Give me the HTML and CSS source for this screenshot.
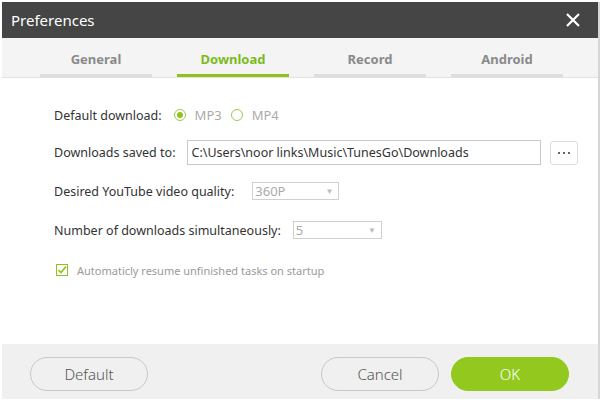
FILE: index.html
```html
<!DOCTYPE html>
<html lang="en">

<head>
    <meta charset="UTF-8">
    <meta name="viewport" content="width=device-width, initial-scale=1.0">
    <title>Preferences</title>
    <link rel="stylesheet" href="styles.css">
</head>

<body>
    <div class="dialog">
        <div class="title-bar">
            <span class="title">Preferences</span>
            <span class="close">
                <svg width="14" height="14" viewBox="0 0 14 14">
                    <path d="M1 1 L13 13 M13 1 L1 13" stroke="#fff" stroke-width="2.2" fill="none" />
                </svg>
            </span>
        </div>
        <div class="tab-header">
            <span class="tab-item">General</span>
            <span class="tab-item active">Download</span>
            <span class="tab-item">Record</span>
            <span class="tab-item">Android</span>
        </div>
        <div class="content">
            <div class="row row-format">
                <span class="label">Default download:</span>
                <span class="radio checked"></span>
                <span class="radio-text">MP3</span>
                <span class="radio"></span>
                <span class="radio-text">MP4</span>
            </div>
            <div class="row row-path">
                <span class="label">Downloads saved to:</span>
                <div class="path-input">C:\Users\noor links\Music\TunesGo\Downloads</div>
                <div class="browse">
                    <svg width="14" height="4" viewBox="0 0 14 4">
                        <rect x="1" y="1" width="2" height="2" fill="#666" />
                        <rect x="6" y="1" width="2" height="2" fill="#666" />
                        <rect x="11" y="1" width="2" height="2" fill="#666" />
                    </svg>
                </div>
            </div>
            <div class="row row-quality">
                <span class="label">Desired YouTube video quality:</span>
                <div class="select select-quality">360P<span class="arrow">▼</span></div>
            </div>
            <div class="row row-count">
                <span class="label">Number of downloads simultaneously:</span>
                <div class="select select-count">5<span class="arrow">▼</span></div>
            </div>
            <div class="row row-check">
                <span class="checkbox">
                    <svg width="10" height="10" viewBox="0 0 10 10">
                        <path d="M1.5 5 L4 7.5 L9 1.5" stroke="#8dc21f" stroke-width="1.6" fill="none" />
                    </svg>
                </span>
                <span class="check-text">Automaticly resume unfinished tasks on startup</span>
            </div>
        </div>
        <div class="footer">
            <button class="btn">Default</button>
            <button class="btn btn-cancel">Cancel</button>
            <button class="btn btn-ok">OK</button>
        </div>
    </div>
</body>

</html>
```

FILE: styles.css
```css
* {
    box-sizing: border-box;
}

body {
    margin: 0;
    background: #fff;
    font-family: "Noto Sans", "Open Sans", sans-serif;
}

.dialog {
    width: 598px;
    margin: 2px 0 0 2px;
    border-right: 2px solid #d6d6d6;
}

.title-bar {
    display: flex;
    align-items: center;
    justify-content: space-between;
    height: 36px;
    padding: 0 18px 0 9px;
    background: #454545;
    color: #fff;
}

.title {
    font-size: 15px;
}

.close {
    display: flex;
}

.tab-header {
    display: flex;
    gap: 25px;
    padding-left: 38px;
    background: #f4f4f4;
    border-bottom: 1px solid #e2e2e2;
}

.tab-item {
    width: 112px;
    height: 39px;
    line-height: 42px;
    text-align: center;
    font-size: 13px;
    font-weight: bold;
    color: #8a8a8a;
    border-bottom: 3px solid #dedede;
}

.tab-item.active {
    color: #7dbb1d;
    border-bottom-color: #8dc21f;
}

.content {
    height: 266px;
    padding: 26px 0 0 52px;
    font-size: 12.5px;
    color: #333;
}

.row {
    display: flex;
    align-items: center;
}

.row-format {
    height: 22px;
}

.row-path {
    height: 25px;
    margin-top: 14px;
}

.row-quality {
    height: 18px;
    margin-top: 17px;
}

.row-count {
    height: 18px;
    margin-top: 21px;
}

.row-check {
    height: 16px;
    margin-top: 23px;
}

.label {
    margin-right: 12px;
}

.radio {
    width: 12px;
    height: 12px;
    border: 1px solid #9ccc4a;
    border-radius: 50%;
    display: flex;
    align-items: center;
    justify-content: center;
}

.radio.checked::after {
    content: "";
    width: 6px;
    height: 6px;
    border-radius: 50%;
    background: #8dc21f;
}

.radio-text {
    margin: 0 9px 0 9px;
    font-size: 13px;
    color: #aaa;
}

.path-input {
    width: 354px;
    height: 25px;
    line-height: 23px;
    padding-left: 3px;
    border: 1px solid #c9c9c9;
    color: #333;
}

.browse {
    width: 28px;
    height: 24px;
    margin-left: 9px;
    border: 1px solid #dcdcdc;
    border-radius: 3px;
    display: flex;
    align-items: center;
    justify-content: center;
}

.select {
    position: relative;
    height: 18px;
    line-height: 16px;
    padding-left: 2px;
    border: 1px solid #d0d0d0;
    font-size: 13px;
    color: #aaa;
}

.select-quality {
    width: 87px;
    margin-left: 6px;
}

.select-count {
    width: 89px;
}

.select .arrow {
    position: absolute;
    right: 5px;
    top: 0;
    font-size: 8px;
    color: #bbb;
}

.checkbox {
    width: 12px;
    height: 12px;
    border: 1px solid #8dc21f;
    display: flex;
    align-items: center;
    justify-content: center;
    margin: 0 9px 0 2px;
}

.check-text {
    font-size: 11px;
    color: #9a9a9a;
}

.footer {
    display: flex;
    align-items: flex-start;
    height: 55px;
    padding: 13px 29px 0 28px;
    background: #f0f0f0;
}

.btn {
    width: 118px;
    height: 34px;
    border: 1px solid #c8c8c8;
    border-radius: 17px;
    background: #f0f0f0;
    color: #555;
    font-family: "Noto Sans", "Open Sans", sans-serif;
    font-size: 15px;
    font-weight: 300;
}

.btn-cancel {
    margin-left: auto;
}

.btn-ok {
    margin-left: 12px;
    border-color: #93c91f;
    background: #93c91f;
    color: #fff;
}
```
